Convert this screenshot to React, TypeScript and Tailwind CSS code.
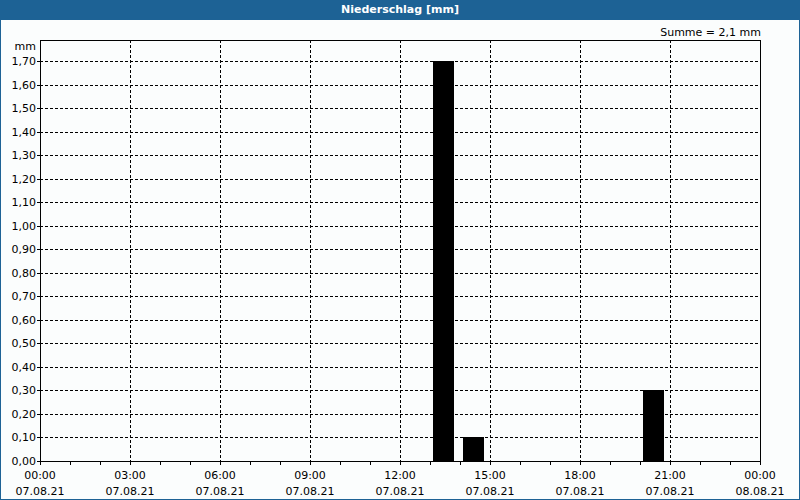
import React from 'react';

const L = 40, R = 760, T = 61, B = 461;
const yStep = (B - T) / 17;
const yLabels = Array.from({ length: 18 }, (_, i) => i);
const xTicks = Array.from({ length: 25 }, (_, i) => i);
const bars = [
  { h: 13, v: 1.7 },
  { h: 14, v: 0.1 },
  { h: 20, v: 0.3 },
];
const xLabels = ['00:00', '03:00', '06:00', '09:00', '12:00', '15:00', '18:00', '21:00', '00:00'];

export default function App() {
  return (
    <div className="w-[800px] h-[500px] bg-[#1d6295] flex flex-col" style={{ fontFamily: 'Tahoma, "DejaVu Sans", sans-serif' }}>
      <div className="h-[20px] flex items-center justify-center text-white text-[11px] font-bold">Niederschlag [mm]</div>
      <div className="flex-1 mx-[1px] mb-[1px] bg-[#fbfdfd]">
        <svg width="798" height="479" viewBox="1 20 798 479" className="block text-[11px]" fill="#000">
          <text x="761" y="36" textAnchor="end">Summe = 2,1 mm</text>
          <text x="36" y="50" textAnchor="end">mm</text>
          {yLabels.map(i => {
            const y = B - i * yStep;
            return (
              <g key={i}>
                {i > 0 && <line x1={L} x2={R} y1={Math.round(y) + 0.5} y2={Math.round(y) + 0.5} stroke="#000" strokeDasharray="3 2" />}
                <line x1={L - 3} x2={L} y1={Math.round(y) + 0.5} y2={Math.round(y) + 0.5} stroke="#000" />
                <text x="36" y={Math.round(y) + 4} textAnchor="end">{(i / 10).toFixed(2).replace('.', ',')}</text>
              </g>
            );
          })}
          {xTicks.map(i => {
            const x = L + i * 30 + 0.5;
            return (
              <g key={i}>
                {i % 3 === 0 && i > 0 && i < 24 && <line x1={x} x2={x} y1={40} y2={B} stroke="#000" strokeDasharray="3 2" />}
                <line x1={x} x2={x} y1={B} y2={B + 4} stroke="#000" />
              </g>
            );
          })}
          {xLabels.map((t, i) => (
            <g key={i}>
              <text x={L + i * 90} y={479} textAnchor="middle">{t}</text>
              <text x={L + i * 90} y={495} textAnchor="middle">{i === 8 ? '08.08.21' : '07.08.21'}</text>
            </g>
          ))}
          {bars.map(b => {
            const h = Math.round(b.v * 10 * yStep);
            return <rect key={b.h} x={L + b.h * 30 + 3} y={B - h} width={21} height={h} fill="#000" />;
          })}
          <rect x={L + 0.5} y={40.5} width={R - L} height={B - 40} fill="none" stroke="#000" />
        </svg>
      </div>
    </div>
  );
}
